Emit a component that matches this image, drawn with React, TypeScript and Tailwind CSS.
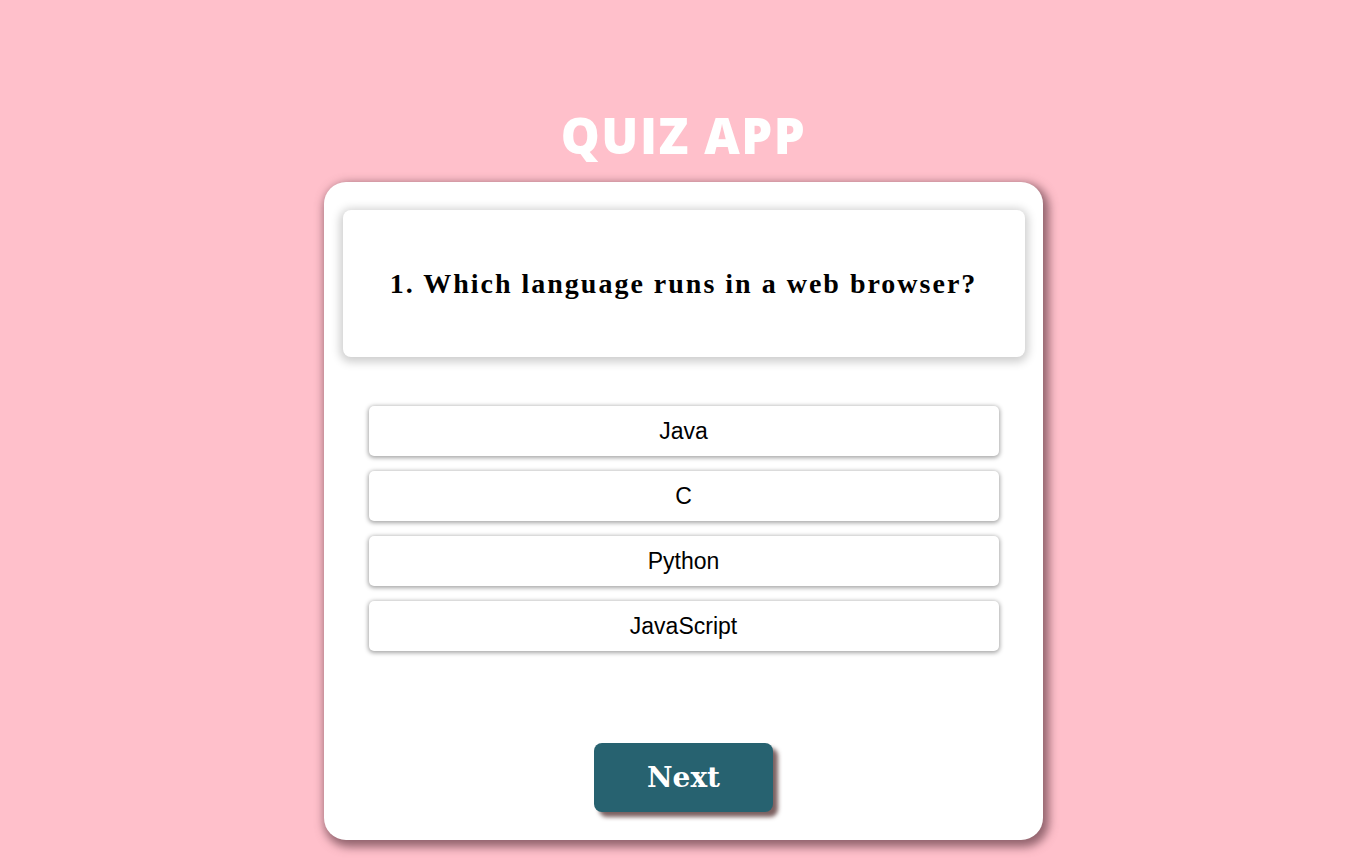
export default function App() {
  const options = ["Java", "C", "Python", "JavaScript"];
  return (
    <div className="min-h-[858px] w-full bg-[#ffc0cb] flex flex-col items-center pl-[7px]">
      <h1 className="mt-[103px] text-[49px] leading-[64px] font-extrabold text-white tracking-[1.5px] font-['Open_Sans',sans-serif]">
        QUIZ APP
      </h1>
      <div className="mt-[15px] w-[719px] h-[658px] bg-white rounded-[22px] shadow-[3px_4px_10px_3px_rgba(100,60,70,0.7)] flex flex-col items-center pt-[28px]">
        <div className="w-[682px] h-[147px] bg-white rounded-[8px] shadow-[0_2px_10px_3px_rgba(0,0,0,0.2)] flex items-center justify-center">
          <p className="font-['Liberation_Serif',serif] font-bold text-[28px] tracking-[2px] text-black">
            1. Which language runs in a web browser?
          </p>
        </div>
        <div className="mt-[49px] flex flex-col gap-[15px]">
          {options.map((o) => (
            <button
              key={o}
              className="w-[630px] h-[50px] bg-white rounded-[5px] shadow-[0_1px_4px_1px_rgba(0,0,0,0.35)] text-[23px] text-black font-['Liberation_Sans',sans-serif]"
            >
              {o}
            </button>
          ))}
        </div>
        <button className="mt-[92px] w-[179px] h-[69px] bg-[#276270] rounded-[8px] shadow-[5px_5px_4px_rgba(110,80,80,0.9)] text-white text-[28px] font-bold font-['DejaVu_Serif',serif]">
          Next
        </button>
      </div>
    </div>
  );
}
